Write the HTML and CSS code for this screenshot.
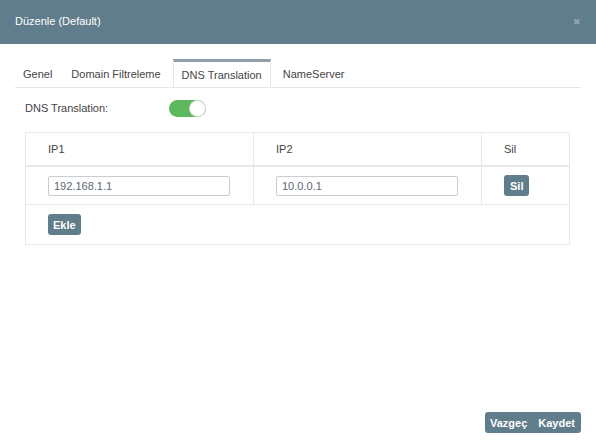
FILE: index.html
```html
<!DOCTYPE html>
<html lang="tr">
<head>
<meta charset="utf-8">
<title>Düzenle</title>
<link rel="stylesheet" href="styles.css">
</head>
<body>
<div class="modal">
  <div class="modal-header">
    <span class="modal-title">Düzenle (Default)</span>
    <span class="close">&#x2716;</span>
  </div>
  <div class="modal-body">
    <ul class="tabs">
      <li class="tab">Genel</li>
      <li class="tab">Domain Filtreleme</li>
      <li class="tab active">DNS Translation</li>
      <li class="tab">NameServer</li>
    </ul>
    <div class="pane">
      <div class="field">
        <label class="field-label">DNS Translation:</label>
        <span class="switch"><span class="knob"></span></span>
      </div>
      <table class="grid">
        <thead>
          <tr><th class="c1">IP1</th><th class="c2">IP2</th><th class="c3">Sil</th></tr>
        </thead>
        <tbody>
          <tr>
            <td><input class="inp" type="text" value="192.168.1.1"></td>
            <td><input class="inp" type="text" value="10.0.0.1"></td>
            <td><button class="btn">Sil</button></td>
          </tr>
          <tr class="add-row">
            <td colspan="3"><button class="btn btn-add">Ekle</button></td>
          </tr>
        </tbody>
      </table>
    </div>
  </div>
  <div class="modal-footer">
    <div class="btn-group">
      <button class="btn btn-foot">Vazgeç</button>
      <button class="btn btn-foot">Kaydet</button>
    </div>
  </div>
</div>
</body>
</html>
```
FILE: styles.css
```css
html, body {
  margin: 0;
  padding: 0;
  height: 100%;
  background: #ffffff;
}
body {
  font-family: "Liberation Sans", Arial, sans-serif;
  font-size: 11px;
  color: #444;
}
.modal {
  height: 100%;
  display: flex;
  flex-direction: column;
}
.modal-header {
  height: 44px;
  flex: none;
  background: #607d8b;
  display: flex;
  align-items: center;
  justify-content: space-between;
  padding: 0 15px 0 15px;
  box-sizing: border-box;
}
.modal-title {
  color: #ffffff;
  font-size: 11px;
  font-weight: 500;
  margin-top: -2px;
}
.close {
  color: #93a5ae;
  font-size: 9px;
  margin-right: 0;
}
.modal-body {
  flex: 1;
  padding: 16px 15px 0 15px;
}
.tabs {
  list-style: none;
  margin: 0;
  padding: 0;
  display: flex;
  border-bottom: 1px solid #e2e6e9;
  height: 27px;
}
.tab {
  padding: 0 8px;
  border: 1px solid transparent;
  border-top: 3px solid transparent;
  margin-right: 1px;
  display: flex;
  align-items: center;
  height: 24px;
  color: #444;
  margin-top: -1px;
}
.tab:first-child {
  padding-left: 7px;
}
.tab.active {
  border-color: #e2e6e9;
  border-top-color: #8f9ea8;
  border-bottom-color: #ffffff;
  background: #fff;
  box-sizing: border-box;
  height: 28px;
  margin-left: 2px;
  margin-right: 3px;
  padding: 2px 8px 0 8px;
}
.pane {
  padding: 10px 11px 0 10px;
}
.field {
  display: flex;
  align-items: center;
  height: 18px;
  margin-top: 1px;
}
.field-label {
  width: 144px;
  color: #444;
}
.switch {
  width: 37px;
  height: 17px;
  border-radius: 9px;
  background: #5cb85c;
  display: flex;
  align-items: center;
  justify-content: flex-end;
  padding: 0 1px;
  box-sizing: border-box;
}
.knob {
  width: 15px;
  height: 15px;
  border-radius: 50%;
  background: #ffffff;
  box-shadow: 0 0 0 1px #d8dcd8;
}
.grid {
  margin-top: 15px;
  width: 545px;
  border-collapse: collapse;
  border: 1px solid #e4e8eb;
}
.grid th, .grid td {
  border: 1px solid #e4e8eb;
  text-align: left;
  padding: 0 0 0 22px;
  font-weight: normal;
}
.grid th {
  height: 32px;
  border-bottom: 2px solid #e4e8eb;
  color: #444;
}
.grid td {
  height: 37px;
}
.grid .add-row td {
  height: 39px;
}
.c1 { width: 205px; }
.c2 { width: 205px; }
.inp {
  width: 182px;
  height: 20px;
  box-sizing: border-box;
  border: 1px solid #c9ced2;
  border-radius: 2px;
  font-family: "Liberation Sans", Arial, sans-serif;
  font-size: 11px;
  color: #5a6874;
  padding: 0 5px;
  margin: 0;
  display: block;
}
.btn {
  background: #607d8b;
  color: #ffffff;
  border: none;
  border-radius: 3px;
  font-family: "Liberation Sans", Arial, sans-serif;
  font-size: 11px;
  font-weight: bold;
  height: 21px;
  padding: 0 6px;
  margin: 0;
  display: block;
}
.btn-add {
  padding: 0 5px;
}
.modal-footer {
  flex: none;
  display: flex;
  justify-content: flex-end;
  padding: 0 15px 14px 0;
}
.btn-group {
  display: flex;
  background: #607d8b;
  border-radius: 3px;
}
.btn-foot {
  border-radius: 0;
  padding: 0 6px 0 5px;
  background: transparent;
}
```
